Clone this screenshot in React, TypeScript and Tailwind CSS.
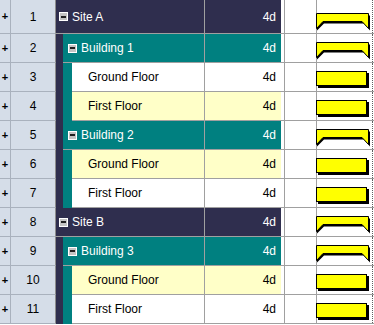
import React from 'react'

type Row = {
  n: number
  level: 0 | 1 | 2
  name: string
}

const rows: Row[] = [
  { n: 1, level: 0, name: 'Site A' },
  { n: 2, level: 1, name: 'Building 1' },
  { n: 3, level: 2, name: 'Ground Floor' },
  { n: 4, level: 2, name: 'First Floor' },
  { n: 5, level: 1, name: 'Building 2' },
  { n: 6, level: 2, name: 'Ground Floor' },
  { n: 7, level: 2, name: 'First Floor' },
  { n: 8, level: 0, name: 'Site B' },
  { n: 9, level: 1, name: 'Building 3' },
  { n: 10, level: 2, name: 'Ground Floor' },
  { n: 11, level: 2, name: 'First Floor' },
]

function MinusBox() {
  return (
    <span className="flex h-[9px] w-[9px] shrink-0 items-center justify-center border border-white bg-[#c4c4c4]">
      <span className="h-[2px] w-[5px] bg-[#202020]" />
    </span>
  )
}

function SummaryBar() {
  return (
    <svg width="56" height="19" viewBox="0 0 56 19" className="block">
      <polygon points="1,2.5 54,2.5 54,17.5 48,10.5 8,10.5 1,17.5" fill="#000" />
      <polygon points="0.5,0.5 52.5,0.5 52.5,15.5 46,8.5 7,8.5 0.5,15.5" fill="#ffff00" stroke="#000" strokeWidth="1" />
    </svg>
  )
}

function TaskBar() {
  return (
    <svg width="54" height="18" viewBox="0 0 54 18" className="block">
      <rect x="2" y="2" width="51" height="15" fill="#000" />
      <rect x="0.5" y="0.5" width="50" height="14" fill="#ffff00" stroke="#000" strokeWidth="1" />
    </svg>
  )
}

function GridRow({ row, first }: { row: Row; first: boolean }) {
  const h = first ? 'h-[34px]' : 'h-[29px]'
  const yellow = row.level === 2 && row.n % 2 === 0
  const cellBg =
    row.level === 0 ? 'bg-[#2f2e4e] text-white' : row.level === 1 ? 'bg-[#008080] text-white' : yellow ? 'bg-[#ffffc8] text-black' : 'bg-white text-black'

  return (
    <div className={`flex ${h}`}>
      <div className="flex w-[11px] items-center justify-center border-r border-b border-[#a9b1bd] bg-[#d5dde8] text-[11px] font-bold leading-none text-black">
        +
      </div>
      <div className="flex w-[45px] items-center justify-center border-r border-b border-r-[#8c8c8c] border-b-[#a9b1bd] bg-[#d5dde8] text-[12px] text-black">
        {row.n}
      </div>

      <div className="flex w-[225px] bg-[#2f2e4e]">
        {row.level >= 1 && <div className="w-[7px] shrink-0 bg-[#2f2e4e]" />}
        {row.level >= 2 && <div className="w-[9px] shrink-0 bg-[#008080]" />}
        <div className={`flex flex-1 border-b border-[#a0a0a0] ${cellBg}`}>
          <div className="flex flex-1 items-center border-r border-[#a0a0a0]">
            {row.level === 0 && (
              <div className="flex items-center gap-[4px] pl-[3px]">
                <MinusBox />
                <span>{row.name}</span>
              </div>
            )}
            {row.level === 1 && (
              <div className="flex items-center gap-[4px] pl-[5px]">
                <MinusBox />
                <span>{row.name}</span>
              </div>
            )}
            {row.level === 2 && <span className="pl-[16px]">{row.name}</span>}
          </div>
          <div className="flex w-[76px] items-center justify-end pr-[5px]">4d</div>
        </div>
      </div>

      <div className="w-[3px] border-b border-[#a0a0a0] bg-white" />

      <div className="flex w-[90px] border-l border-b border-[#a0a0a0] bg-white">
        <div className="w-[32px] border-r border-[#a0a0a0]" />
        <div className={`-ml-px flex flex-1 items-start ${first ? 'pt-[13px]' : 'pt-[8px]'}`}>
          {row.level === 2 ? <TaskBar /> : <SummaryBar />}
        </div>
        <div className="w-px border-r border-dotted border-[#606060]" />
        <div className="w-px" />
      </div>
    </div>
  )
}

export default function App() {
  return (
    <div className="h-[325px] w-[374px] overflow-hidden bg-white text-[12px] font-['Liberation_Sans',Arial,sans-serif]">
      {rows.map((row, i) => (
        <GridRow key={row.n} row={row} first={i === 0} />
      ))}
    </div>
  )
}
